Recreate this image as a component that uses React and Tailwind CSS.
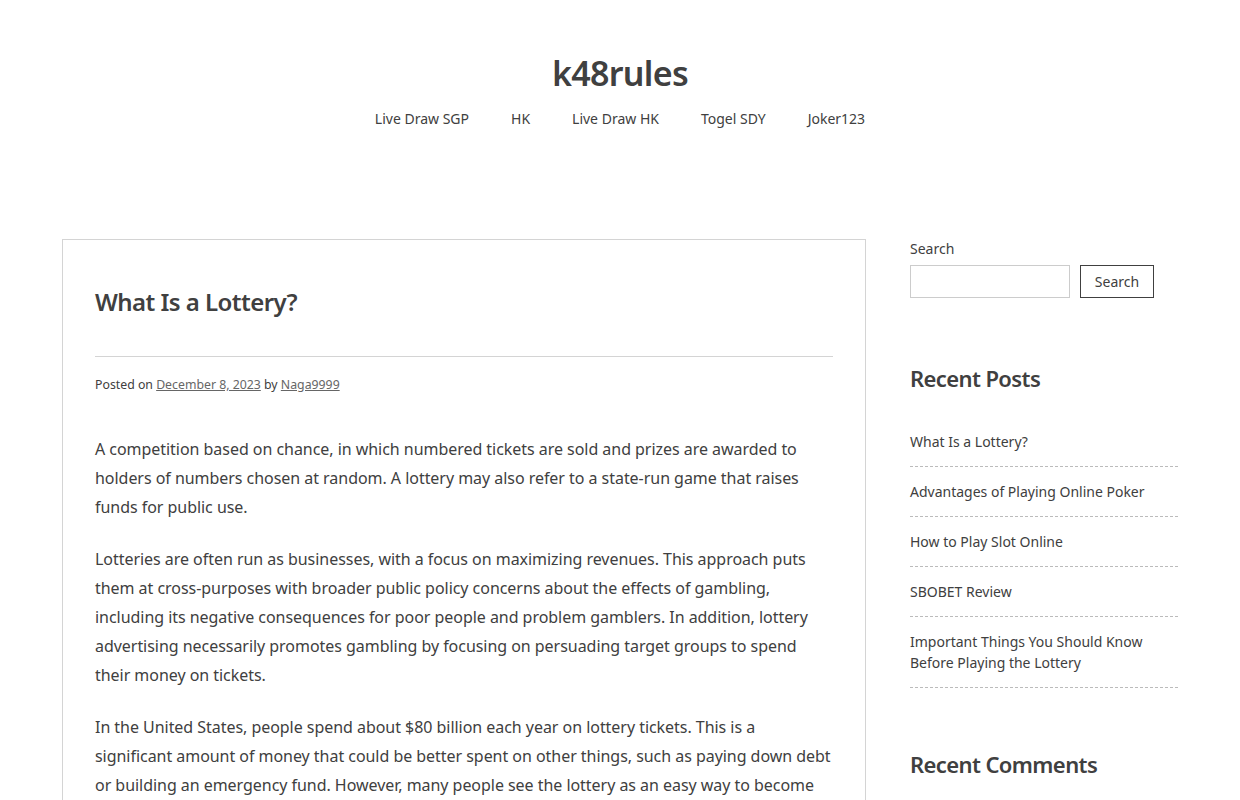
export default function App() {
  const nav = ["Live Draw SGP", "HK", "Live Draw HK", "Togel SDY", "Joker123"];
  const posts = [
    "What Is a Lottery?",
    "Advantages of Playing Online Poker",
    "How to Play Slot Online",
    "SBOBET Review",
    "Important Things You Should Know Before Playing the Lottery",
  ];
  return (
    <div className="min-h-screen bg-white text-[#404040]" style={{ fontFamily: '"Noto Sans", sans-serif' }}>
      <header className="pt-[50px] text-center">
        <h1 className="text-[34px] font-semibold leading-[46px] tracking-[-0.7px] text-[#404040]">k48rules</h1>
        <nav className="mt-[11px] flex justify-center gap-[42px] text-[14px] leading-[24px]">
          {nav.map((n) => (
            <a key={n} className="text-[#404040]">{n}</a>
          ))}
        </nav>
      </header>

      <div className="mx-auto mt-[108px] flex w-[1116px] items-start gap-[44px]">
        <main className="w-[804px] shrink-0 border border-[#d4d4d4] px-[32px] pt-[44px]">
          <h2 className="text-[24px] font-semibold leading-[36px] tracking-[-0.55px] text-[#404040]">What Is a Lottery?</h2>
          <div className="mt-[36px] border-t border-[#d4d4d4]" />
          <div className="mt-[18px] text-[12.3px] leading-[20px]">
            Posted on <a className="text-[#666] underline">December 8, 2023</a> by{" "}
            <a className="text-[#666] underline">Naga9999</a>
          </div>
          <div className="mt-[40px] space-y-[24px] text-[16px] leading-[28.8px] tracking-[-0.04px]">
            <p>
              A competition based on chance, in which numbered tickets are sold and prizes are awarded to holders of
              numbers chosen at random. A lottery may also refer to a state-run game that raises funds for public use.
            </p>
            <p>
              Lotteries are often run as businesses, with a focus on maximizing revenues. This approach puts them at
              cross-purposes with broader public policy concerns about the effects of gambling, including its negative
              consequences for poor people and problem gamblers. In addition, lottery advertising necessarily promotes
              gambling by focusing on persuading target groups to spend their money on tickets.
            </p>
            <p>
              In the United States, people spend about $80 billion each year on lottery tickets. This is a significant
              amount of money that could be better spent on other things, such as paying down debt or building an
              emergency fund. However, many people see the lottery as an easy way to become rich.
            </p>
          </div>
        </main>

        <aside className="w-[268px] shrink-0">
          <label className="block text-[14px] leading-[20px]">Search</label>
          <div className="mt-[6px] flex gap-[10px]">
            <input className="h-[33px] w-[160px] border border-[#ccc] px-2 text-[14px] outline-none" />
            <button className="h-[33px] w-[74px] border border-[#404040] bg-white text-[14px] text-[#404040]">
              Search
            </button>
          </div>

          <h3 className="mt-[64px] text-[22px] font-semibold leading-[32px] tracking-[-0.6px]">Recent Posts</h3>
          <ul className="mt-[37px] text-[14px] leading-[21px]">
            {posts.map((p, i) => (
              <li
                key={p}
                className={`border-b border-dashed border-[#bbb] pb-[14px] ${i === 0 ? "" : "pt-[14px]"}`}
              >
                {p}
              </li>
            ))}
          </ul>

          <h3 className="mt-[60px] text-[22px] font-semibold leading-[32px] tracking-[-0.6px]">Recent Comments</h3>
        </aside>
      </div>
    </div>
  );
}
